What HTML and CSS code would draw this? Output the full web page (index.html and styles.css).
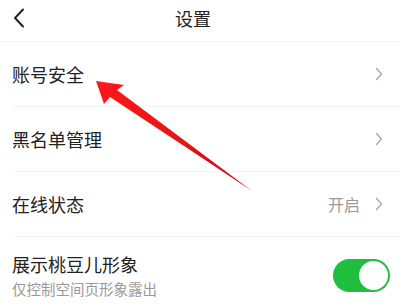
FILE: index.html
```html
<!DOCTYPE html>
<html lang="zh">
<head>
<meta charset="utf-8">
<link rel="stylesheet" href="styles.css">
</head>
<body>
<div class="page">
  <header class="header">
    <svg class="back" viewBox="0 0 12 20" width="12" height="20"><path d="M10 1.5 L2 10 L10 18.5" fill="none" stroke="#222" stroke-width="2" stroke-linecap="round" stroke-linejoin="round"/></svg>
    <div class="title">设置</div>
  </header>
  <div class="row">
    <div class="label">账号安全</div>
    <div class="right"><svg class="chev" viewBox="0 0 8 14" width="8" height="14"><path d="M1.5 1.5 L6.5 7 L1.5 12.5" fill="none" stroke="#aaa" stroke-width="1.4" stroke-linecap="round" stroke-linejoin="round"/></svg></div>
  </div>
  <div class="row">
    <div class="label">黑名单管理</div>
    <div class="right"><svg class="chev" viewBox="0 0 8 14" width="8" height="14"><path d="M1.5 1.5 L6.5 7 L1.5 12.5" fill="none" stroke="#aaa" stroke-width="1.4" stroke-linecap="round" stroke-linejoin="round"/></svg></div>
  </div>
  <div class="row">
    <div class="label">在线状态</div>
    <div class="right"><span class="value">开启</span><svg class="chev" viewBox="0 0 8 14" width="8" height="14"><path d="M1.5 1.5 L6.5 7 L1.5 12.5" fill="none" stroke="#aaa" stroke-width="1.4" stroke-linecap="round" stroke-linejoin="round"/></svg></div>
  </div>
  <div class="row last">
    <div class="text">
      <div class="label">展示桃豆儿形象</div>
      <div class="sub">仅控制空间页形象露出</div>
    </div>
    <div class="toggle"><div class="knob"></div></div>
  </div>
  <svg class="arrow" viewBox="0 0 400 304" width="400" height="304">
    <defs>
      <linearGradient id="g" x1="0" y1="0" x2="1" y2="1">
        <stop offset="0" stop-color="#ff1a1a"/>
        <stop offset="1" stop-color="#d10c12"/>
      </linearGradient>
      <filter id="f" x="-20%" y="-20%" width="140%" height="140%">
        <feGaussianBlur stdDeviation="0.6"/>
      </filter>
    </defs>
    <polygon points="96,81 104,104 110,97 252,191 117,90 124,85" fill="url(#g)" filter="url(#f)"/>
  </svg>
</div>
</body>
</html>
```
FILE: styles.css
```css
* { box-sizing: border-box; }
html, body { margin: 0; padding: 0; background: #fff; }
body {
  font-family: "Noto Sans CJK SC", "Noto Sans", sans-serif;
  color: #222;
}
.page {
  position: relative;
  width: 400px;
  height: 304px;
  overflow: hidden;
}
.header {
  height: 42px;
  position: relative;
  display: flex;
  align-items: center;
  justify-content: center;
  border-bottom: 1px solid #f3f3f3;
}
.back {
  position: absolute;
  left: 13px;
  top: 8px;
}
.title {
  font-size: 18px;
  line-height: 20px;
  margin-top: -6px;
  margin-left: -14px;
}
.row {
  height: 65px;
  margin-left: 12px;
  padding-right: 17px;
  display: flex;
  align-items: center;
  justify-content: space-between;
  border-bottom: 1px solid #f3f3f3;
}
.row.last { border-bottom: none; height: 70px; padding-right: 10px; }
.label {
  font-size: 18px;
  line-height: 22px;
}
.right {
  display: flex;
  align-items: center;
  gap: 15px;
}
.value {
  font-size: 16px;
  color: #999;
}
.chev { display: block; }
.text { display: flex; flex-direction: column; gap: 5px; margin-top: 6px; }
.sub {
  font-size: 14.5px;
  line-height: 18px;
  color: #999;
}
.toggle {
  width: 57px;
  height: 33px;
  border-radius: 17px;
  background: #1fbe3e;
  padding: 2px;
  display: flex;
  justify-content: flex-end;
  margin-top: 6px;
}
.knob {
  width: 29px;
  height: 29px;
  border-radius: 50%;
  background: #fff;
}
.arrow {
  position: absolute;
  left: 0;
  top: 0;
  pointer-events: none;
}
```
